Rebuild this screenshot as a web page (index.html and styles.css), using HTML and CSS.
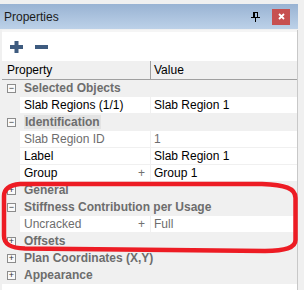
FILE: index.html
```html
<!DOCTYPE html>
<html lang="en">
<head>
    <meta charset="UTF-8">
    <title>Properties</title>
    <link rel="stylesheet" href="styles.css">
</head>
<body>
    <div class="window">
        <div class="titlebar">
            <span class="title">Properties</span>
            <svg class="pin" viewBox="0 0 10 10" width="10" height="10">
                <rect x="2.5" y="0.5" width="4" height="5" fill="none" stroke="#000" />
                <rect x="2" y="0" width="2" height="6" fill="#000" />
                <rect x="0" y="5" width="9" height="1" fill="#000" />
                <rect x="4" y="6" width="1" height="4" fill="#000" />
            </svg>
            <div class="close">
                <svg viewBox="0 0 7 7" width="7" height="7">
                    <path d="M1 1 L6 6 M6 1 L1 6" stroke="#fff" stroke-width="1.8" />
                </svg>
            </div>
        </div>

        <div class="panel">
            <div class="toolbar">
                <svg class="tool" viewBox="0 0 13 12" width="13" height="12">
                    <rect x="0" y="4" width="13" height="4" fill="#3e5b7f" />
                    <rect x="4.5" y="0" width="4" height="12" fill="#3e5b7f" />
                </svg>
                <svg class="tool" viewBox="0 0 13 12" width="13" height="12">
                    <rect x="0" y="4" width="13" height="4" fill="#3e5b7f" />
                </svg>
            </div>

            <div class="grid">
                <div class="header">
                    <div class="head-name">Property</div>
                    <div class="head-value">Value</div>
                </div>

                <div class="row cat">
                    <div class="gutter"><span class="box">&minus;</span></div>
                    <div class="cat-label">Selected Objects</div>
                </div>
                <div class="row">
                    <div class="gutter"></div>
                    <div class="name">Slab Regions (1/1)</div>
                    <div class="value">Slab Region 1</div>
                </div>

                <div class="row cat">
                    <div class="gutter"><span class="box">&minus;</span></div>
                    <div class="cat-label"><span class="focus">Identification</span></div>
                </div>
                <div class="row">
                    <div class="gutter"></div>
                    <div class="name muted">Slab Region ID</div>
                    <div class="value muted">1</div>
                </div>
                <div class="row">
                    <div class="gutter"></div>
                    <div class="name">Label</div>
                    <div class="value">Slab Region 1</div>
                </div>
                <div class="row">
                    <div class="gutter"></div>
                    <div class="name">Group <span class="more">+</span></div>
                    <div class="value">Group 1</div>
                </div>

                <div class="row cat">
                    <div class="gutter"><span class="box">+</span></div>
                    <div class="cat-label">General</div>
                </div>
                <div class="row cat">
                    <div class="gutter"><span class="box">&minus;</span></div>
                    <div class="cat-label">Stiffness Contribution per Usage</div>
                </div>
                <div class="row">
                    <div class="gutter"></div>
                    <div class="name muted">Uncracked <span class="more">+</span></div>
                    <div class="value muted">Full</div>
                </div>
                <div class="row cat">
                    <div class="gutter"><span class="box">+</span></div>
                    <div class="cat-label">Offsets</div>
                </div>
                <div class="row cat">
                    <div class="gutter"><span class="box">+</span></div>
                    <div class="cat-label">Plan Coordinates (X,Y)</div>
                </div>
                <div class="row cat">
                    <div class="gutter"><span class="box">+</span></div>
                    <div class="cat-label">Appearance</div>
                </div>
                <div class="filler"></div>
            </div>
        </div>
    </div>

    <!-- hand-drawn red mark over the grid -->
    <svg class="markup" viewBox="0 0 304 290" width="304" height="290">
        <path d="M20 184 L262 184 C285 185 295.5 188 295.5 198 L295.5 240 C295.5 248 285 250.5 265 251 L25 248.5 C10 248 4 244 4 236 L4 196 C4 189 10 185 20 184 Z"
              fill="none" stroke="#ed1c24" stroke-width="4.5" />
    </svg>
</body>
</html>
```

FILE: styles.css
```css
body {
    margin: 0;
    background: #f0f0f0;
    font-family: "Liberation Sans", Arial, sans-serif;
    font-size: 12px;
    color: #000;
    width: 304px;
    height: 290px;
    overflow: hidden;
    position: relative;
}

.window {
    padding-top: 4px;
}

.titlebar {
    width: 298px;
    height: 25px;
    box-sizing: border-box;
    display: flex;
    align-items: center;
    padding-left: 4px;
    background: linear-gradient(#99b3d3, #bcd1e8);
}

.title {
    flex: 1;
    font-size: 12px;
    color: #1b1b1b;
}

.pin {
    margin-right: 11px;
}

.close {
    width: 18px;
    height: 16px;
    margin-right: 8px;
    background: #c75050;
    display: flex;
    align-items: center;
    justify-content: center;
}

.panel {
    margin-top: 1px;
    margin-left: 2px;
    width: 295px;
    border-right: 1px solid #c8c8c8;
    background: #fff;
}

.toolbar {
    height: 31px;
    box-sizing: border-box;
    border-top: 2px solid #f5f5f5;
    padding: 9px 0 0 8px;
    display: flex;
    gap: 12px;
}

.header {
    display: flex;
    height: 19px;
    box-sizing: border-box;
    background: #f0f0f0;
    border-bottom: 1px solid #a0a0a0;
    line-height: 18px;
}

.head-name {
    width: 149px;
    padding-left: 5px;
    box-sizing: border-box;
    border-right: 1px solid #a0a0a0;
}

.head-value {
    padding-left: 3px;
}

.row {
    display: flex;
    height: 17px;
    line-height: 16px;
}

.gutter {
    width: 18px;
    flex: none;
    background: #f0f0f0;
    display: flex;
    align-items: center;
}

.box {
    width: 9px;
    height: 9px;
    box-sizing: border-box;
    margin-left: 5px;
    border: 1px solid #8c8c8c;
    background: #fafafa;
    font-size: 9px;
    line-height: 7px;
    text-align: center;
    color: #333;
}

.name {
    width: 131px;
    box-sizing: border-box;
    padding: 0 5px 0 4px;
    border-right: 1px solid #f0f0f0;
    border-bottom: 1px solid #f0f0f0;
    display: flex;
    justify-content: space-between;
}

.value {
    flex: 1;
    padding-left: 3px;
    border-bottom: 1px solid #f0f0f0;
}

.muted {
    color: #6d6d6d;
}

.more {
    color: #707070;
}

.cat {
    background: #f0f0f0;
}

.cat-label {
    padding-left: 4px;
    font-weight: bold;
    color: #6d6d6d;
}

.focus {
    background: #e3e3e3;
    padding: 0 1px;
}

.filler {
    height: 10px;
}

.markup {
    position: absolute;
    left: 0;
    top: 0;
    pointer-events: none;
}
```
